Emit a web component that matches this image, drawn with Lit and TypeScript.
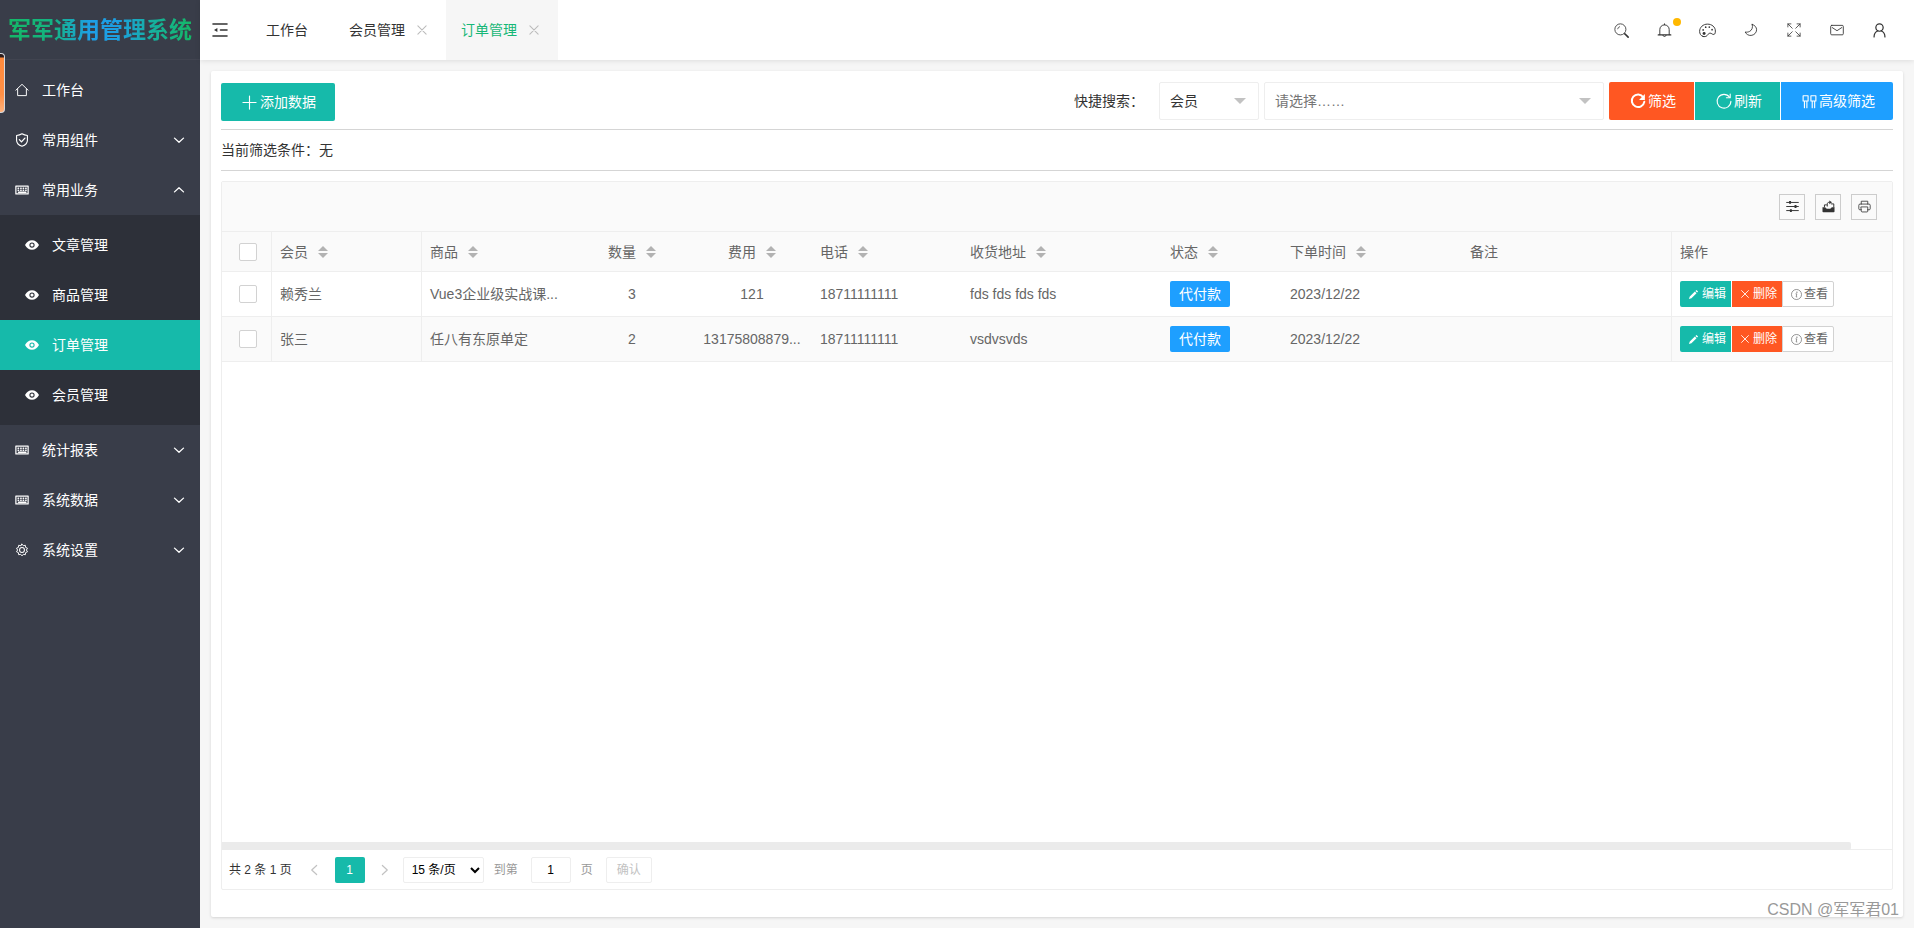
import { LitElement, html, css, svg, nothing } from "lit";
import { customElement, property, state } from "lit/decorators.js";
import { classMap } from "lit/directives/class-map.js";

const line = (d: string, w = 1) => svg`<path d=${d} fill="none" stroke="currentColor" stroke-width=${w} stroke-linecap="round" stroke-linejoin="round" />`;
const solid = (d: string) => svg`<path d=${d} fill="currentColor" fill-rule="evenodd" />`;

/* All glyphs are drawn on a 16 x 16 grid. */
const glyphs: Record<string, unknown> = {
  fold: [line("M1 2h14M8.500 8H15M1 14h14", 1.6), solid("M2 8l3.4-2v4z")],
  home: line("M1 8.2L8 1.5l7 6.7M3 6.6V14.4h10V6.6", 1.1),
  shield: [line("M8 .9c2 1.3 4 1.8 6.2 1.9v5.4c0 3.2-2.6 5.6-6.2 6.9-3.6-1.3-6.2-3.7-6.2-6.9V2.8C4 2.7 6 2.2 8 .9z", 1.3), line("M5 7.6l2.4 2.6L11.300 5.800", 1.5)],
  keyboard: [line("M1 3.500h14v9H1z", 1.4), line("M3.500 6h.6M6.500 6h.6M9.300 6h.6M12.200 6h.6M3.500 8.200h.6M6.500 8.200h.6M9.300 8.200h.6M12.200 8.200h.6M4 10.500h8.500", 1.6)],
  gear: [line("M8 1.300l1.500 1.800 2.300-.5.300 2.400 2.200 1L13 8l1.300 2-2.200 1-.3 2.400-2.300-.5L8 14.700l-1.500-1.800-2.300.5-.3-2.400-2.200-1L3 8 1.700 6l2.200-1 .3-2.400 2.300.5z", 1.1), svg`<circle cx="8" cy="8" r="2.800" fill="none" stroke="currentColor" stroke-width="1.200"/>`],
  eye: [solid("M0 8c1.800-3.500 4.700-5.500 8-5.500s6.200 2 8 5.500c-1.800 3.500-4.700 5.500-8 5.500S1.800 11.500 0 8zM8 5a3 3 0 1 0 0 6 3 3 0 0 0 0-6z"), svg`<circle cx="8" cy="8" r="1.800" fill="currentColor"/>`],
  down: line("M2 5.500L8 11l6-5.500", 1.8),
  up: line("M2 10.500L8 5l6 5.500", 1.8),
  left: line("M11.500 2L5 8l6.500 6", 1.6),
  right: line("M4.500 2L11 8l-6.500 6", 1.6),
  close: line("M2.500 2.500l11 11M13.500 2.500l-11 11", 1.4),
  plus: line("M8 1v14M1 8h14", 1.2),
  search: [svg`<circle cx="6.800" cy="6.800" r="5.900" fill="none" stroke="currentColor" stroke-width=".9"/>`, line("M3.900 6.200A3 3 0 0 1 6 3.900", .8), line("M11.500 11.500l3.600 3.600", 1.700)],
  bell: [line("M3 12.500V7a5 5 0 0 1 10 0v5.500M8 1.800V.9", 1), line("M1.300 12.700h13.400", 1.3), line("M6.300 13.200a1.800 1.800 0 0 0 3.400 0", 1)],
  palette: [line("M3.800 13.600C1.500 13 .6 10.900.6 8.800.6 4.900 3.900 2 8 2s7.400 2.700 7.400 6.500c0 1.500-.2 3-1.400 3.200-1.600.3-2.200-1.500-3.800-1.200-1.500.3-1.700 1.400-2.600 2.300-1 1-2.300 1.200-3.800.8z", .9), svg`<g fill="currentColor"><circle cx="3.900" cy="7.500" r=".8"/><circle cx="6.300" cy="4.900" r=".8"/><circle cx="9.700" cy="4.800" r=".8"/><circle cx="12.300" cy="7.200" r=".8"/><circle cx="4.800" cy="10.900" r="1.400"/></g>`],
  moon: line("M9.400 1.600c1 3.900-.4 6.700-3.200 8.100-1.600.8-3.300.9-4.900.6 1.400 2.700 3.900 4.100 6.800 3.900 3.500-.3 6.300-3.100 6.300-6.500 0-2.800-2-5.200-5-6.100z", 1),
  expand: line("M1 4.500V1h3.500M1 1l5 5M11.500 1H15v3.500M15 1l-5 5M1 11.500V15h3.500M1 15l5-5M15 11.500V15h-3.500M15 15l-5-5", .9),
  mail: [line("M2 2.700h12a1.200 1.200 0 0 1 1.200 1.200v8.400a1.200 1.200 0 0 1-1.200 1.200H2A1.200 1.200 0 0 1 .8 12.300V3.900A1.200 1.200 0 0 1 2 2.700z", 1), line("M2.500 5.200L8 8.800l5.500-3.600", 1)],
  user: [svg`<circle cx="8" cy="4.900" r="3.900" fill="none" stroke="currentColor" stroke-width="1.300"/>`, line("M2.200 14.900c0-3.300 1.400-5.500 3.800-6.400M13.800 14.900c0-3.300-1.400-5.500-3.800-6.400", 1.300)],
  reload: [line("M13.300 4.200A6.300 6.300 0 1 0 14.300 8.800", 2), solid("M14.900 1v6H9z")],
  refresh: [line("M13.600 4.200A6.900 6.900 0 1 0 14.900 8.300", 1.1), line("M14.200 1v3.800H10.400", 1.1)],
  grid: line("M1.200 1.800h5.300v5.700H1.200zM9.500 1.800h5.300v5.700H9.500zM2.600 7.500v7.200M5.200 7.500v7.200M10.900 7.500v7.200M13.500 7.500v7.200", 1.2),
  filter: [line("M.8 3h14.400M.8 8h14.400M.8 13h14.400", 1.2), solid("M3.800 1.300h2.400v3.400H3.800zM10.500 6.300h2.400v3.400h-2.400zM4.800 11.300h2.400v3.400H4.800z")],
  export: [solid("M.6 9h3.500c.5 1.300 1.600 1.800 3.900 1.800s3.400-.5 3.900-1.800h3.500v5a1 1 0 0 1-1 1H1.600a1 1 0 0 1-1-1z"), line("M3 8.300V6h2.500M11.500 4.800h3v4M6.500 7.500V5c0-1.500.8-2.200 2.500-2.200", 1.2), solid("M9 .6l3.300 2.300L9 5.200z")],
  print: [line("M4 5V1.500h8V5M4 12H2.200A1.200 1.200 0 0 1 1 10.800V6.500A1.500 1.500 0 0 1 2.500 5h11A1.500 1.500 0 0 1 15 6.500v4.300A1.200 1.200 0 0 1 13.800 12H12M4 8.500h8v5.200a1 1 0 0 1-1 1H5a1 1 0 0 1-1-1z", 1)],
  pencil: solid("M12.300 1.300l2.400 2.400-1.500 1.500-2.400-2.400zM10 3.600L12.400 6 5 13.400l-3.700 1.300L2.600 11z"),
  info: [svg`<circle cx="8" cy="8" r="7.300" fill="none" stroke="currentColor" stroke-width="1"/><circle cx="8.600" cy="4.600" r=".9" fill="currentColor"/>`, line("M7.200 7h1.200l-.9 4.600h1", 1)],
};

@customElement("ui-icon")
export class UiIcon extends LitElement {
  @property() name = "";
  @property({ type: Number }) size = 16;
  static styles = css`
    :host { display: inline-flex; flex: none; }
    svg { display: block; overflow: visible; }
  `;
  render() {
    return html`<svg width=${this.size} height=${this.size} viewBox="0 0 16 16" aria-hidden="true">${glyphs[this.name] ?? nothing}</svg>`;
  }
}

interface MenuItem { label: string; icon: string; children?: string[]; open?: boolean; leaf?: boolean }
interface Column { label: string; kind: string; sortable?: boolean }
interface Order { member: string; goods: string; count: string; fee: string; phone: string; address: string; status: string; date: string; remark: string }

@customElement("app-root")
export class AppRoot extends LitElement {
  @state() private current = "订单管理";

  private menu: MenuItem[] = [
    { label: "工作台", icon: "home", leaf: true },
    { label: "常用组件", icon: "shield" },
    { label: "常用业务", icon: "keyboard", open: true, children: ["文章管理", "商品管理", "订单管理", "会员管理"] },
    { label: "统计报表", icon: "keyboard" },
    { label: "系统数据", icon: "keyboard" },
    { label: "系统设置", icon: "gear" },
  ];

  private columns: Column[] = [
    { label: "会员", kind: "member", sortable: true },
    { label: "商品", kind: "goods", sortable: true },
    { label: "数量", kind: "count", sortable: true },
    { label: "费用", kind: "fee", sortable: true },
    { label: "电话", kind: "phone", sortable: true },
    { label: "收货地址", kind: "address", sortable: true },
    { label: "状态", kind: "status", sortable: true },
    { label: "下单时间", kind: "date", sortable: true },
    { label: "备注", kind: "remark" },
    { label: "操作", kind: "actions" },
  ];

  private orders: Order[] = [
    { member: "赖秀兰", goods: "Vue3企业级实战课...", count: "3", fee: "121", phone: "18711111111", address: "fds fds fds fds", status: "代付款", date: "2023/12/22", remark: "" },
    { member: "张三", goods: "任八有东原单定", count: "2", fee: "13175808879...", phone: "18711111111", address: "vsdvsvds", status: "代付款", date: "2023/12/22", remark: "" },
  ];

  static styles = css`
    :host {
      display: flex;
      position: relative;
      min-height: 100vh;
      background: #f6f6f6;
      color: #333;
      font: 14px/24px "Liberation Sans", "Noto Sans CJK SC", sans-serif;
    }
    * { box-sizing: border-box; }
    button, input, select { font: inherit; color: inherit; margin: 0; }
    button { border: 0; background: none; padding: 0; cursor: pointer; white-space: nowrap; }
    a { color: inherit; text-decoration: none; }

    .side { flex: none; width: 200px; background: #393d49; color: #fff; }
    .logo {
      height: 60px;
      display: flex;
      align-items: center;
      justify-content: center;
      border-bottom: 1px solid #414450;
    }
    .brand {
      margin: 0;
      font-size: 23px;
      line-height: 32px;
      font-weight: 700;
      white-space: nowrap;
      color: transparent;
      background: linear-gradient(90deg, #14b866 0%, #14b384 25%, #1e9fe8 45%, #1c9fe0 60%, #16b0a0 78%, #14b866 100%);
      -webkit-background-clip: text;
      background-clip: text;
    }
    .menu { padding: 5px 0; }
    .item { display: flex; align-items: center; height: 50px; padding: 0 15px; gap: 13px; }
    .item .caret { margin-left: auto; }
    .sub { background: #2d3039; padding: 5px 0; }
    .child { display: flex; align-items: center; height: 50px; padding: 0 25px; gap: 13px; }
    .child.on { background: #16baaa; }
    .peek {
      position: absolute;
      left: 0;
      top: 53px;
      width: 5px;
      height: 60px;
      border: 1px solid #d5d8de;
      border-left: 0;
      border-radius: 0 4px 4px 0;
      background: linear-gradient(#2b1c1c 0 3px, #ff8a3c 4px, #ff8f45 70%, #ffb27c);
    }

    .main { flex: 1; min-width: 0; display: flex; flex-direction: column; }
    .top {
      display: flex;
      align-items: center;
      height: 60px;
      padding-left: 12px;
      background: #fff;
      box-shadow: 0 1px 5px rgba(0, 0, 0, .1);
      position: relative;
    }
    .fold { display: flex; }
    .tabs { display: flex; margin-left: 12px; height: 60px; }
    .tab { display: flex; align-items: center; padding: 0 18px 0 15px; gap: 11px; }
    .tab.first { padding: 0 26px; }
    .tab.on { background: #f6f6f6; color: #16b777; }
    .tab button { display: flex; color: #bbb; }
    .tools { display: flex; margin-left: auto; padding-right: 13px; }
    .tool { display: flex; align-items: center; justify-content: center; width: 43px; height: 60px; position: relative; }
    .dot { position: absolute; top: 18px; right: 5px; width: 8px; height: 8px; border-radius: 50%; background: #ffb800; }

    .card {
      flex: 1;
      display: flex;
      flex-direction: column;
      margin: 11px;
      padding: 11px 10px 27px;
      background: #fff;
      border-radius: 2px;
      box-shadow: 0 1px 3px rgba(0, 0, 0, .14);
    }
    .bar { display: flex; align-items: flex-end; justify-content: space-between; padding-bottom: 8px; border-bottom: 1px solid #d5d5d5; }
    .btn { display: inline-flex; align-items: center; justify-content: center; gap: 2px; height: 38px; padding: 0 18px 0 21px; color: #fff; }
    .green { background: #16baaa; }
    .red { background: #ff5722; }
    .blue { background: #1e9fff; }
    .add { border-radius: 2px; gap: 3px; padding-right: 19px; }
    .search { display: flex; align-items: center; padding-bottom: 1px; }
    .search .label { margin-right: 15px; }
    .field { position: relative; margin-right: 5px; display: flex; }
    .field select, .field input {
      width: 100%;
      height: 38px;
      padding: 0 10px;
      border: 1px solid #eee;
      border-radius: 2px;
      background: #fff;
      appearance: none;
      outline: 0;
    }
    .field input::placeholder { color: #757575; opacity: 1; }
    .field.kind { width: 100px; }
    .field.value { width: 340px; }
    .field::after {
      content: "";
      position: absolute;
      right: 13px;
      top: 16px;
      border: 6px solid transparent;
      border-top-color: #c2c2c2;
      border-bottom: 0;
      pointer-events: none;
    }
    .group { display: flex; gap: 1px; border-radius: 2px; overflow: hidden; }
    .filters { padding: 8px 0; border-bottom: 1px solid #d5d5d5; }

    .grid { flex: 1; display: flex; flex-direction: column; margin-top: 10px; border: 1px solid #eee; border-radius: 2px; }
    .gridtools { display: flex; justify-content: flex-end; align-items: center; gap: 10px; height: 50px; padding-right: 15px; background: #fafafa; border-bottom: 1px solid #eee; }
    .square { display: flex; align-items: center; justify-content: center; width: 26px; height: 26px; border: 1px solid #ccc; }
    .scroll { flex: 1; }
    table { width: 100%; table-layout: fixed; border-collapse: separate; border-spacing: 0; color: #666; }
    th, td { height: 45px; padding: 0 8px; border-bottom: 1px solid #eee; text-align: left; font-weight: 400; white-space: nowrap; line-height: 24px; }
    th { height: 40px; background: #fafafa; }
    tbody tr:nth-child(even) td { background: #fafafa; }
    .check { width: 50px; padding: 0 14px 0 17px; border-right: 1px solid #eee; }
    .member { width: 150px; border-right: 1px solid #eee; }
    .goods, .phone { width: 150px; }
    .count, .fee { width: 120px; text-align: center; }
    .address { width: 200px; }
    .status { width: 120px; }
    .date { width: 180px; }
    .actions { width: 221px; border-left: 1px solid #eee; }
    .tick { display: block; margin: 0; width: 18px; height: 18px; appearance: none; border: 1px solid #d2d2d2; border-radius: 2px; background: #fff; }
    .head { display: inline-flex; align-items: center; gap: 10px; color: inherit; }
    .sort { display: flex; flex-direction: column; gap: 2px; }
    .sort::before, .sort::after { content: ""; border: 5px solid transparent; }
    .sort::before { border-top: 0; border-bottom-color: #b2b2b2; }
    .sort::after { border-bottom: 0; border-top-color: #b2b2b2; }
    .badge { display: block; width: 60px; height: 26px; line-height: 26px; text-align: center; color: #fff; background: #1e9fff; border-radius: 2px; }
    .ops { display: flex; font-size: 12px; }
    .op { display: flex; align-items: center; height: 26px; padding: 0 5px 0 8px; gap: 3px; color: #fff; }
    .op + .op { border-left: 1px solid #fff; }
    .op.green { border-radius: 2px 0 0 2px; }
    .op.plain, .op + .op.plain { color: #666; background: #fff; border: 1px solid #d2d2d2; border-radius: 0 2px 2px 0; gap: 2px; }
    .track { height: 8px; border-bottom: 1px solid #eee; }
    .thumb { width: calc(100% - 41px); height: 8px; background: #ebebeb; border-radius: 0 2px 2px 0; }

    .pager { display: flex; align-items: center; height: 39px; padding-left: 7px; font-size: 12px; }
    .pager button { height: 26px; }
    .step { display: flex; align-items: center; justify-content: center; width: 43px; padding-left: 2px; color: #c2c2c2; }
    .page { width: 30px; background: #16baaa; color: #fff; border-radius: 2px; }
    .step.next { width: 38px; }
    .pager select { width: 81px; height: 26px; border: 1px solid #eee; border-radius: 2px; background: #fff; color: #000; padding: 0 4px; }
    .muted { color: #999; }
    .pager .to { margin: 0 13px 0 10px; }
    .pager .unit { margin: 0 13px 0 10px; }
    .pager .jump { width: 40px; height: 26px; border: 1px solid #eee; border-radius: 2px; text-align: center; color: #000; padding: 0; }
    .pager .go { width: 46px; border: 1px solid #eee; border-radius: 2px; color: #c2c2c2; }

    .mark { position: absolute; right: 15px; bottom: 6px; font-size: 16px; color: #999; }
  `;

  private renderMenu(item: MenuItem) {
    return html`
      <a class="item" href="#"><ui-icon name=${item.icon} size="14"></ui-icon><span>${item.label}</span>
        ${item.leaf ? nothing : html`<ui-icon class="caret" name=${item.open ? "up" : "down"} size="12"></ui-icon>`}</a>
      ${item.children
        ? html`<div class="sub">${item.children.map((c) => html`
            <a class=${classMap({ child: true, on: c === this.current })} href="#" @click=${() => (this.current = c)}>
              <ui-icon name="eye" size="14"></ui-icon><span>${c}</span></a>`)}</div>`
        : nothing}`;
  }

  private renderRow(o: Order) {
    return html`<tr>
      <td class="check"><input class="tick" type="checkbox" aria-label=${o.member} /></td>
      <td class="member">${o.member}</td>
      <td class="goods">${o.goods}</td>
      <td class="count">${o.count}</td>
      <td class="fee">${o.fee}</td>
      <td class="phone">${o.phone}</td>
      <td class="address">${o.address}</td>
      <td class="status"><span class="badge">${o.status}</span></td>
      <td class="date">${o.date}</td>
      <td class="remark">${o.remark}</td>
      <td class="actions"><div class="ops">
        <button class="op green"><ui-icon name="pencil" size="11"></ui-icon>编辑</button>
        <button class="op red"><ui-icon name="close" size="10"></ui-icon>删除</button>
        <button class="op plain"><ui-icon name="info" size="11"></ui-icon>查看</button>
      </div></td>
    </tr>`;
  }

  render() {
    return html`
      <aside class="side">
        <div class="logo"><h1 class="brand">军军通用管理系统</h1></div>
        <nav class="menu">${this.menu.map((m) => this.renderMenu(m))}</nav>
      </aside>
      <div class="peek"></div>
      <div class="main">
        <header class="top">
          <button class="fold" aria-label="fold"><ui-icon name="fold" size="16"></ui-icon></button>
          <nav class="tabs">
            <div class="tab first"><a href="#">工作台</a></div>
            <div class="tab"><a href="#">会员管理</a><button aria-label="close"><ui-icon name="close" size="12"></ui-icon></button></div>
            <div class="tab on"><a href="#">订单管理</a><button aria-label="close"><ui-icon name="close" size="12"></ui-icon></button></div>
          </nav>
          <div class="tools">
            ${["search", "bell", "palette", "moon", "expand", "mail", "user"].map((n) => html`
              <button class="tool" aria-label=${n}><ui-icon name=${n} size=${n === "palette" ? 17 : n === "expand" || n === "mail" || n === "moon" ? 14 : 15}></ui-icon>${n === "bell" ? html`<span class="dot"></span>` : nothing}</button>`)}
          </div>
        </header>
        <main class="card">
          <div class="bar">
            <button class="btn add green"><ui-icon name="plus" size="15"></ui-icon><span>添加数据</span></button>
            <div class="search">
              <label class="label" for="kind">快捷搜索：</label>
              <div class="field kind"><select id="kind"><option>会员</option></select></div>
              <div class="field value"><input type="text" placeholder="请选择……" aria-label="请选择" /></div>
              <div class="group">
                <button class="btn red"><ui-icon name="reload" size="16"></ui-icon><span>筛选</span></button>
                <button class="btn green"><ui-icon name="refresh" size="16"></ui-icon><span>刷新</span></button>
                <button class="btn blue"><ui-icon name="grid" size="15"></ui-icon><span>高级筛选</span></button>
              </div>
            </div>
          </div>
          <div class="filters">当前筛选条件：无</div>
          <section class="grid">
            <div class="gridtools">
              ${["filter", "export", "print"].map((n) => html`<button class="square" aria-label=${n}><ui-icon name=${n} size="13"></ui-icon></button>`)}
            </div>
            <div class="scroll">
              <table>
                <thead><tr>
                  <th class="check"><input class="tick" type="checkbox" aria-label="all" /></th>
                  ${this.columns.map((c) => html`<th class=${c.kind}>${c.sortable
                    ? html`<button class="head">${c.label}<span class="sort"></span></button>` : c.label}</th>`)}
                </tr></thead>
                <tbody>${this.orders.map((o) => this.renderRow(o))}</tbody>
              </table>
            </div>
            <div class="track"><div class="thumb"></div></div>
            <div class="pager">
              <span>共 2 条 1 页</span>
              <button class="step" aria-label="previous"><ui-icon name="left" size="12"></ui-icon></button>
              <button class="page">1</button>
              <button class="step next" aria-label="next"><ui-icon name="right" size="12"></ui-icon></button>
              <select aria-label="page size"><option>15 条/页</option></select>
              <label class="muted to" for="jump">到第</label>
              <input class="jump" id="jump" type="text" value="1" />
              <span class="muted unit">页</span>
              <button class="go">确认</button>
            </div>
          </section>
        </main>
      </div>
      <div class="mark">CSDN @军军君01</div>
    `;
  }
}
